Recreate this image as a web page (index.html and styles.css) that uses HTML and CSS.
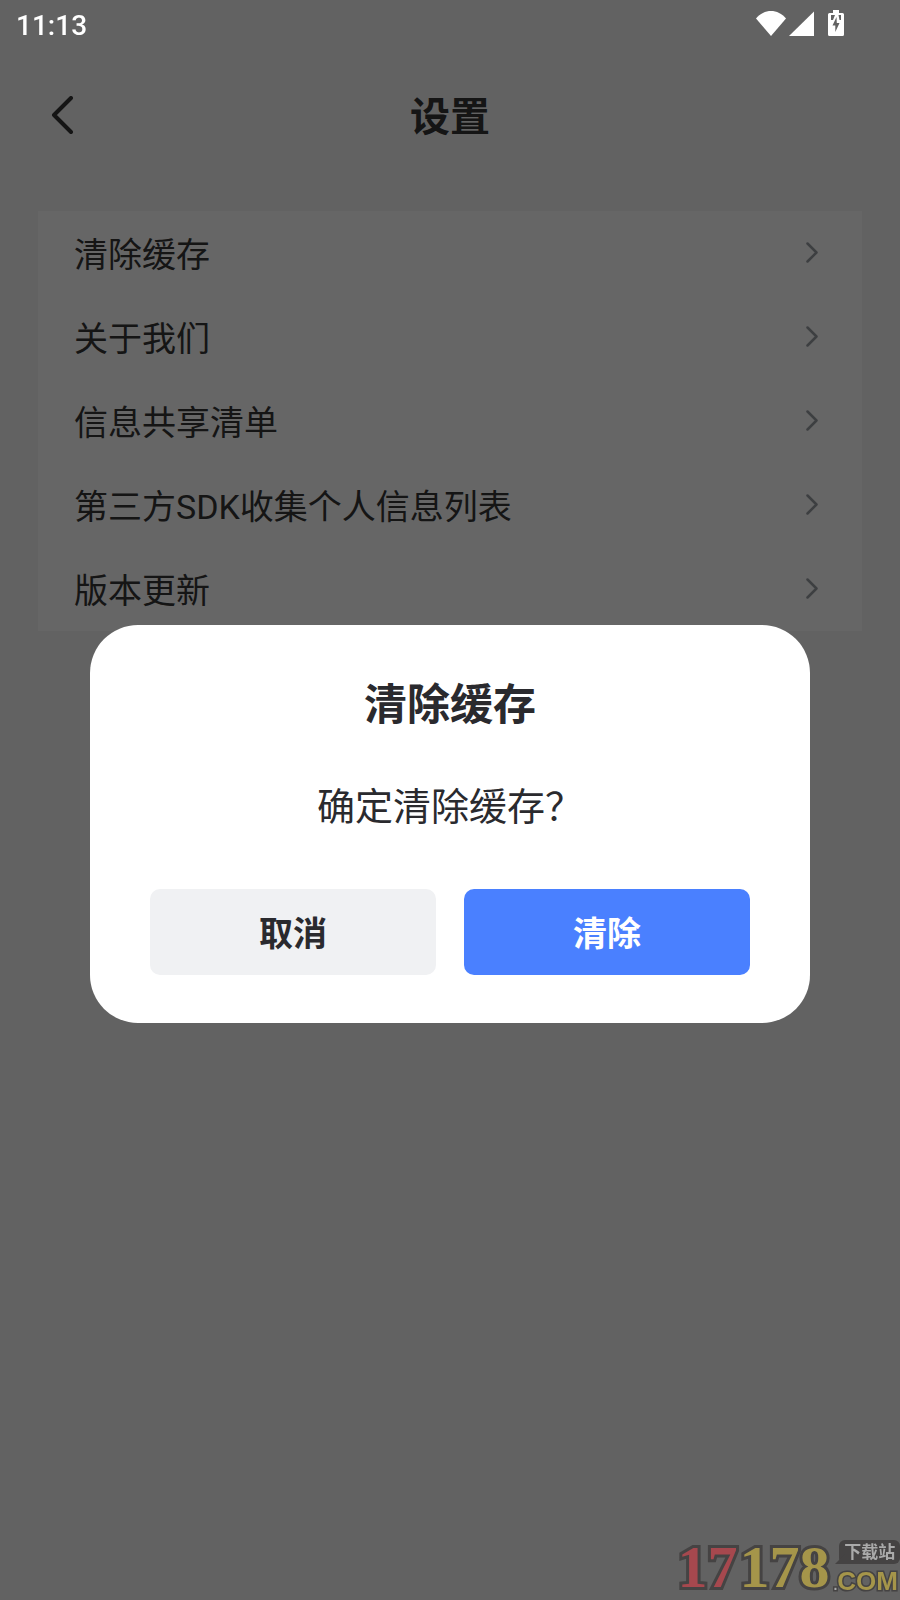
FILE: index.html
```
<!DOCTYPE html>
<html lang="zh-CN">
<head>
  <meta charset="UTF-8" />
  <meta name="viewport" content="width=device-width, initial-scale=1.0"/>
  <title>设置</title>
  <link rel="stylesheet" href="styles.css">
</head>
<body>

  <!-- Status bar -->
  <div class="status-bar">
    <span class="time">11:13</span>
    <div class="status-icons">
      <svg class="wifi" width="30" height="26" viewBox="0 0 30 26"><path d="M0 8.500C8-1.500 22-1.500 30 8.500L15 26z"/></svg>
      <svg class="signal" width="25" height="26" viewBox="0 0 25 26"><path d="M25 1.500V26H0z"/></svg>
      <svg class="battery" width="16" height="26" viewBox="0 0 16 26"><path fill-rule="evenodd" d="M5 0h6v3h3.500a1.500 1.500 0 0 1 1.500 1.500v20a1.500 1.500 0 0 1-1.500 1.500h-13A1.500 1.500 0 0 1 0 24.500v-20A1.500 1.500 0 0 1 1.500 3H5zM3 5v5h2l2-5zM8.500 7L4.500 15.500h2.800V22L11.500 13H8.800zM10.500 5l1 5H13V5z"/></svg>
    </div>
  </div>

  <!-- Settings page -->
  <header class="page-header">
    <button class="back-btn" aria-label="返回">
      <svg width="24" height="40" viewBox="0 0 24 40"><path d="M21 2L4 19l17 17"/></svg>
    </button>
    <h1>设置</h1>
  </header>

  <ul class="settings-list">
    <li><a href="#"><span>清除缓存</span><svg class="chevron" width="12" height="22" viewBox="0 0 12 22"><path d="M1.500 1.500l9 9-9 9"/></svg></a></li>
    <li><a href="#"><span>关于我们</span><svg class="chevron" width="12" height="22" viewBox="0 0 12 22"><path d="M1.500 1.500l9 9-9 9"/></svg></a></li>
    <li><a href="#"><span>信息共享清单</span><svg class="chevron" width="12" height="22" viewBox="0 0 12 22"><path d="M1.500 1.500l9 9-9 9"/></svg></a></li>
    <li><a href="#"><span>第三方SDK收集个人信息列表</span><svg class="chevron" width="12" height="22" viewBox="0 0 12 22"><path d="M1.500 1.500l9 9-9 9"/></svg></a></li>
    <li><a href="#"><span>版本更新</span><svg class="chevron" width="12" height="22" viewBox="0 0 12 22"><path d="M1.500 1.500l9 9-9 9"/></svg></a></li>
  </ul>

  <!-- Confirm dialog -->
  <div class="overlay">
    <div class="dialog" role="dialog" aria-labelledby="dialog-title">
      <h2 id="dialog-title">清除缓存</h2>
      <p>确定清除缓存？</p>
      <div class="dialog-buttons">
        <button class="btn">取消</button>
        <button class="btn btn-primary">清除</button>
      </div>
    </div>
  </div>

  <!-- Watermark -->
  <div class="watermark">
    <div class="mark-number"><span class="red">17</span><span>178</span></div>
    <div class="mark-side">
      <span class="mark-tag">下载站</span>
      <span class="mark-com"><span class="dot">.</span>COM</span>
    </div>
  </div>

</body>
</html>
```
FILE: styles.css
```
* {
  margin: 0;
  padding: 0;
  box-sizing: border-box;
}

body {
  min-height: 100vh;
  font-family: Roboto, "Noto Sans CJK SC", sans-serif;
  background: #f6f6f6;
  color: #353535;
}

button {
  border: none;
  font-family: inherit;
  cursor: pointer;
}

/* status bar stays above the overlay */
.status-bar {
  position: sticky;
  top: 0;
  z-index: 20;
  height: 48px;
  padding: 0 56px 0 16px;
  display: flex;
  justify-content: space-between;
  align-items: center;
  color: #fff;
}

.time {
  padding-top: 4px;
  font-size: 28px;
  font-weight: 500;
  line-height: 40px;
}

.status-icons {
  display: flex;
  gap: 3px;
  padding-bottom: 2px;
}

.status-icons svg {
  fill: #fff;
}

.battery {
  margin-left: 11px;
}

.page-header {
  height: 136px;
  padding: 0 50px;
  display: grid;
  grid-template-columns: 24px 1fr 24px;
  align-items: center;
}

.page-header h1 {
  padding-top: 4px;
  font-size: 40px;
  line-height: 56px;
  font-weight: 700;
  text-align: center;
}

.back-btn {
  background: none;
  height: 40px;
}

.back-btn svg {
  display: block;
  fill: none;
  stroke: #353535;
  stroke-width: 4;
  stroke-linecap: round;
  stroke-linejoin: round;
}

.settings-list {
  list-style: none;
  margin: 27px 38px 0;
  background: #fff;
}

.settings-list a {
  height: 84px;
  padding: 0 44px 0 36px;
  display: flex;
  justify-content: space-between;
  align-items: center;
  font-size: 34px;
  line-height: 48px;
  color: inherit;
  text-decoration: none;
}

.settings-list span {
  padding-top: 4px;
}

.chevron {
  fill: none;
  stroke: #999da3;
  stroke-width: 2.5;
  stroke-linecap: round;
  stroke-linejoin: round;
}

.overlay {
  position: fixed;
  inset: 0;
  z-index: 10;
  padding-top: 48px;
  display: flex;
  justify-content: center;
  align-items: center;
  background: rgba(0, 0, 0, 0.6);
}

.dialog {
  width: 80%;
  padding: 50px 60px 48px;
  border-radius: 48px;
  background: #fff;
  color: #2a2a2e;
  text-align: center;
}

.dialog h2 {
  font-size: 43px;
  line-height: 60px;
  font-weight: 700;
}

.dialog p {
  margin: 44px 0 54px;
  font-size: 38px;
  line-height: 56px;
}

.dialog-buttons {
  display: flex;
  gap: 28px;
}

.btn {
  flex: 1;
  height: 86px;
  padding-bottom: 2px;
  border-radius: 10px;
  font-size: 34px;
  font-weight: 700;
  background: #f0f1f3;
  color: #2a2a2e;
}

.btn-primary {
  background: #4a80ff;
  color: #fff;
}

.watermark {
  position: fixed;
  right: 0;
  bottom: 0;
  z-index: 30;
  display: flex;
  align-items: flex-end;
  gap: 4px;
  color: #a5954a;
  font-weight: 700;
}

.mark-number {
  display: flex;
  gap: 2px;
  font-family: "Liberation Serif", serif;
  font-size: 60px;
  line-height: 66px;
  -webkit-text-stroke: 6px #454343;
  paint-order: stroke fill;
}

.mark-number .red {
  color: #a6484e;
}

.mark-side {
  display: flex;
  flex-direction: column;
}

.mark-tag {
  position: relative;
  margin-left: 6px;
  padding: 0 4px;
  border-radius: 6px;
  font-size: 17px;
  line-height: 24px;
  text-align: center;
  background: #454343;
  color: #aaa;
}

/* speech bubble tail */
.mark-tag::before {
  content: "";
  position: absolute;
  left: -4px;
  bottom: 0;
  border-left: 10px solid transparent;
  border-bottom: 10px solid #454343;
}

.mark-com {
  padding: 2px 2px 0 0;
  font-family: "Liberation Sans", sans-serif;
  font-size: 26px;
  line-height: 30px;
  -webkit-text-stroke: 3px #454343;
  paint-order: stroke fill;
}

.mark-com .dot {
  color: #aaa;
  font-size: 14px;
}
```
